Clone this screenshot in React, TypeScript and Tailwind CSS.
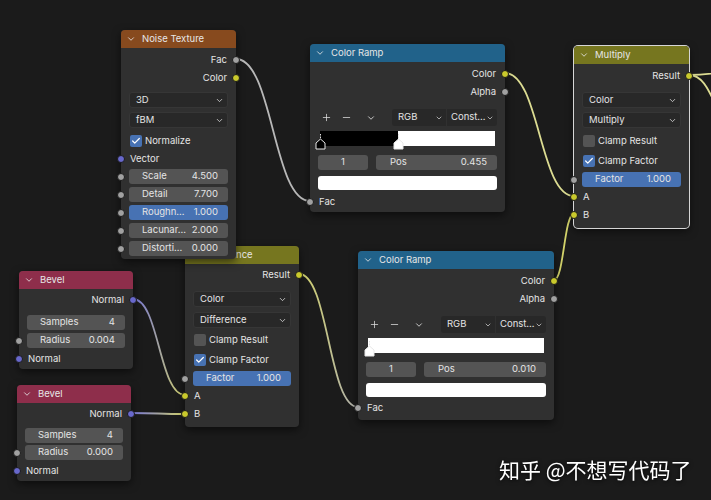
import React from "react";
import { ChevronDown, Plus, Minus, Check } from "lucide-react";

type SC = "gray" | "yellow" | "purple";
const sockCls: Record<SC, string> = {
  gray: "bg-[#a1a1a1]",
  yellow: "bg-[#c9c92c]",
  purple: "bg-[#6868cc]",
};

function Socket({ side, color }: { side: "l" | "r"; color: SC }) {
  return (
    <span
      className={`absolute top-1/2 -translate-y-1/2 w-[8px] h-[8px] rounded-full border border-[#1a1a1a] ${
        side === "l" ? "left-[-4px]" : "right-[-4px]"
      } ${sockCls[color]}`}
    />
  );
}

function Node({
  pos,
  title,
  header,
  selected,
  children,
}: {
  pos: string;
  title: string;
  header: string;
  selected?: boolean;
  children: React.ReactNode;
}) {
  return (
    <div
      className={`absolute rounded-[4px] bg-[#303030] shadow-[0_3px_8px_rgba(0,0,0,0.55)] flex flex-col ${pos} ${
        selected ? "ring-1 ring-[#d6d6d6]" : ""
      }`}
    >
      <div className={`h-[18px] rounded-t-[4px] flex items-center pl-[5px] gap-[6px] text-[#e6e6e6] ${header}`}>
        <ChevronDown size={10} strokeWidth={2} className="shrink-0" />
        <span className="leading-none">{title}</span>
      </div>
      {children}
    </div>
  );
}

function Out({ label, color, cls = "" }: { label: string; color: SC; cls?: string }) {
  return (
    <div className={`relative h-[18px] flex items-center justify-end pr-[9px] ${cls}`}>
      <span>{label}</span>
      <Socket side="r" color={color} />
    </div>
  );
}

function In({ label, color, cls = "" }: { label: string; color: SC; cls?: string }) {
  return (
    <div className={`relative h-[18px] flex items-center pl-[9px] ${cls}`}>
      <span>{label}</span>
      <Socket side="l" color={color} />
    </div>
  );
}

function Field({
  label,
  value,
  sock,
  blue,
  cls = "",
}: {
  label: string;
  value: string;
  sock?: SC;
  blue?: boolean;
  cls?: string;
}) {
  return (
    <div className={`relative px-[8px] ${cls}`}>
      <div
        className={`h-[15px] rounded-[3px] flex items-center justify-between pl-[13px] pr-[10px] ${
          blue ? "bg-[#4772b3]" : "bg-[#545454]"
        }`}
      >
        <span>{label}</span>
        <span>{value}</span>
      </div>
      {sock && <Socket side="l" color={sock} />}
    </div>
  );
}

function Drop({ label, cls = "" }: { label: string; cls?: string }) {
  return (
    <div className={`mx-[8px] h-[16px] rounded-[3px] bg-[#282828] border border-[#363636] flex items-center justify-between pl-[6px] pr-[3px] ${cls}`}>
      <span>{label}</span>
      <ChevronDown size={9} strokeWidth={2} />
    </div>
  );
}

function CheckRow({ label, checked, cls = "" }: { label: string; checked?: boolean; cls?: string }) {
  return (
    <div className={`h-[18px] flex items-center pl-[9px] gap-[3px] ${cls}`}>
      <span
        className={`w-[12px] h-[12px] rounded-[2px] flex items-center justify-center ${
          checked ? "bg-[#4772b3]" : "bg-[#545454]"
        }`}
      >
        {checked && <Check size={10} strokeWidth={3} className="text-white" />}
      </span>
      <span>{label}</span>
    </div>
  );
}

function Stop({ left, fill }: { left: string; fill: string }) {
  return (
    <svg className={`absolute bottom-[-4px] ${left}`} width="11" height="16" viewBox="0 0 11 16">
      <line x1="5.5" y1="0" x2="5.5" y2="6" stroke="#ddd" strokeWidth="1" strokeDasharray="1.5 1" />
      <polygon points="1,9 5.5,5 10,9 10,15 1,15" fill={fill} stroke="#e8e8e8" strokeWidth="1" />
    </svg>
  );
}

function Ramp({ split, stopCls, pos }: { split?: boolean; stopCls: string[]; pos: string }) {
  return (
    <>
      <div className="flex items-center h-[17px] mt-[8px] pr-[8px]">
        <span className="w-[20px] ml-[6px] flex justify-center">
          <Plus size={11} strokeWidth={1.6} />
        </span>
        <span className="w-[20px] flex justify-center">
          <Minus size={11} strokeWidth={1.6} />
        </span>
        <span className="w-[20px] ml-[5px] flex justify-center">
          <ChevronDown size={10} strokeWidth={2} />
        </span>
        <span className="flex-1" />
        <span className="w-[54px] h-[17px] rounded-l-[3px] bg-[#282828] flex items-center justify-between pl-[6px] pr-[3px]">
          <span>RGB</span>
          <ChevronDown size={8} strokeWidth={2} />
        </span>
        <span className="w-[50px] h-[17px] ml-[1px] rounded-r-[3px] bg-[#282828] flex items-center justify-between pl-[4px] pr-[3px]">
          <span>Const...</span>
          <ChevronDown size={8} strokeWidth={2} />
        </span>
      </div>
      <div className="relative mx-[10px] mt-[5px] h-[15px] bg-white flex">
        {split && <div className="w-[78px] h-full bg-black" />}
        {split ? (
          <>
            <Stop left={stopCls[0]} fill="#000" />
            <Stop left={stopCls[1]} fill="#fff" />
          </>
        ) : (
          <Stop left={stopCls[0]} fill="#fff" />
        )}
      </div>
      <div className="flex gap-[8px] px-[8px] mt-[9px]">
        <div className="w-[50px] h-[15px] rounded-[3px] bg-[#545454] flex items-center justify-center">1</div>
        <div className="flex-1 h-[15px] rounded-[3px] bg-[#545454] flex items-center justify-between pl-[14px] pr-[10px]">
          <span>Pos</span>
          <span>{pos}</span>
        </div>
      </div>
      <div className="mx-[8px] mt-[6px] h-[14px] rounded-[3px] bg-white" />
    </>
  );
}

function bez(x1: number, y1: number, x2: number, y2: number) {
  const d = Math.max(Math.abs(x2 - x1) * 0.5, 8);
  return `M${x1},${y1} C${x1 + d},${y1} ${x2 - d},${y2} ${x2},${y2}`;
}

export default function App() {
  return (
    <div className="relative w-[711px] h-[500px] overflow-hidden bg-[#1b1b1b] text-[9.5px] text-[#e4e4e4] font-['Inter','DejaVu_Sans',sans-serif]">
      <svg className="absolute inset-0" width="711" height="500">
        <defs>
          <linearGradient id="yg" gradientUnits="userSpaceOnUse" x1="299" y1="0" x2="358" y2="0">
            <stop offset="0" stopColor="#d2d26a" />
            <stop offset="1" stopColor="#b0b0b0" />
          </linearGradient>
          <linearGradient id="py1" gradientUnits="userSpaceOnUse" x1="133" y1="0" x2="185" y2="0">
            <stop offset="0" stopColor="#7474d8" />
            <stop offset="1" stopColor="#d2d26a" />
          </linearGradient>
          <linearGradient id="py2" gradientUnits="userSpaceOnUse" x1="131" y1="0" x2="185" y2="0">
            <stop offset="0" stopColor="#7474d8" />
            <stop offset="1" stopColor="#d2d26a" />
          </linearGradient>
        </defs>
        <g fill="none" strokeWidth="1.8" strokeLinecap="round">
          <path d={bez(236, 59, 310, 201)} stroke="#b8b8b8" />
          <path d={bez(505, 73, 574, 196)} stroke="#dcdc92" />
          <path d={bez(299, 274, 358, 407)} stroke="url(#yg)" />
          <path d={bez(554, 280, 574, 214)} stroke="#d2d26a" />
          <path d={bez(133, 299, 185, 395)} stroke="url(#py1)" />
          <path d={bez(131, 413, 185, 414)} stroke="url(#py2)" />
          <path d={bez(689, 75, 760, 68)} stroke="#dcdc92" />
          <path d={bez(689, 75, 740, 130)} stroke="#dcdc92" />
        </g>
      </svg>

      {/* Difference (behind Noise Texture) */}
      <Node pos="left-[185px] top-[246px] w-[114px]" title="Difference" header="bg-[#76761f]">
        <Out label="Result" color="yellow" cls="mt-[2px]" />
        <Drop label="Color" cls="mt-[7px]" />
        <Drop label="Difference" cls="mt-[5px]" />
        <CheckRow label="Clamp Result" cls="mt-[3px]" />
        <CheckRow label="Clamp Factor" cls="mt-[2px]" checked />
        <Field label="Factor" value="1.000" blue sock="gray" cls="mt-[2px]" />
        <In label="A" color="yellow" cls="mt-[1px]" />
        <In label="B" color="yellow" />
        <div className="h-[4px]" />
      </Node>

      {/* Noise Texture */}
      <Node pos="left-[121px] top-[30px] w-[115px]" title="Noise Texture" header="bg-[#874a1e]">
        <Out label="Fac" color="gray" cls="mt-[3px]" />
        <Out label="Color" color="yellow" />
        <Drop label="3D" cls="mt-[5px]" />
        <Drop label="fBM" cls="mt-[4px]" />
        <CheckRow label="Normalize" checked cls="mt-[4px]" />
        <In label="Vector" color="purple" />
        <Field label="Scale" value="4.500" sock="gray" cls="mt-[1px]" />
        <Field label="Detail" value="7.700" sock="gray" cls="mt-[3px]" />
        <Field label="Roughn..." value="1.000" sock="gray" blue cls="mt-[3px]" />
        <Field label="Lacunar..." value="2.000" sock="gray" cls="mt-[3px]" />
        <Field label="Distorti..." value="0.000" sock="gray" cls="mt-[3px]" />
        <div className="h-[3px]" />
      </Node>

      {/* Color Ramp 1 */}
      <Node pos="left-[310px] top-[44px] w-[195px]" title="Color Ramp" header="bg-[#21628a]">
        <Out label="Color" color="yellow" cls="mt-[3px]" />
        <Out label="Alpha" color="gray" />
        <Ramp split stopCls={["left-[-5px]", "left-[73px]"]} pos="0.455" />
        <In label="Fac" color="gray" cls="mt-[3px]" />
        <div className="h-[1px]" />
      </Node>

      {/* Color Ramp 2 */}
      <Node pos="left-[358px] top-[251px] w-[196px]" title="Color Ramp" header="bg-[#21628a]">
        <Out label="Color" color="yellow" cls="mt-[3px]" />
        <Out label="Alpha" color="gray" />
        <Ramp stopCls={["left-[-4px]"]} pos="0.010" />
        <In label="Fac" color="gray" cls="mt-[2px]" />
        <div className="h-[3px]" />
      </Node>

      {/* Multiply */}
      <Node pos="left-[574px] top-[46px] w-[115px]" title="Multiply" header="bg-[#76761f]" selected>
        <Out label="Result" color="yellow" cls="mt-[3px]" />
        <Drop label="Color" cls="mt-[7px]" />
        <Drop label="Multiply" cls="mt-[4px]" />
        <CheckRow label="Clamp Result" cls="mt-[4px]" />
        <CheckRow label="Clamp Factor" checked cls="mt-[2px]" />
        <Field label="Factor" value="1.000" blue sock="gray" cls="mt-[2px]" />
        <In label="A" color="yellow" cls="mt-[1px]" />
        <In label="B" color="yellow" />
        <div className="h-[4px]" />
      </Node>

      {/* Bevel 1 */}
      <Node pos="left-[19px] top-[271px] w-[114px]" title="Bevel" header="bg-[#8e2e4b]">
        <Out label="Normal" color="purple" cls="mt-[2px]" />
        <Field label="Samples" value="4" cls="mt-[6px]" />
        <Field label="Radius" value="0.004" sock="gray" cls="mt-[3px]" />
        <In label="Normal" color="purple" cls="mt-[2px]" />
        <div className="h-[1px]" />
      </Node>

      {/* Bevel 2 */}
      <Node pos="left-[17px] top-[385px] w-[114px]" title="Bevel" header="bg-[#8e2e4b]">
        <Out label="Normal" color="purple" cls="mt-[2px]" />
        <Field label="Samples" value="4" cls="mt-[5px]" />
        <Field label="Radius" value="0.000" sock="gray" cls="mt-[2px]" />
        <In label="Normal" color="purple" cls="mt-[2px]" />
        <div className="h-[1px]" />
      </Node>

      <div className="absolute left-[499px] top-[455px] text-[21px] leading-[28px] text-white font-['Noto_Sans_CJK_SC',sans-serif] drop-shadow-[0_1px_2px_rgba(0,0,0,0.8)]">
        知乎 @不想写代码了
      </div>
    </div>
  );
}
